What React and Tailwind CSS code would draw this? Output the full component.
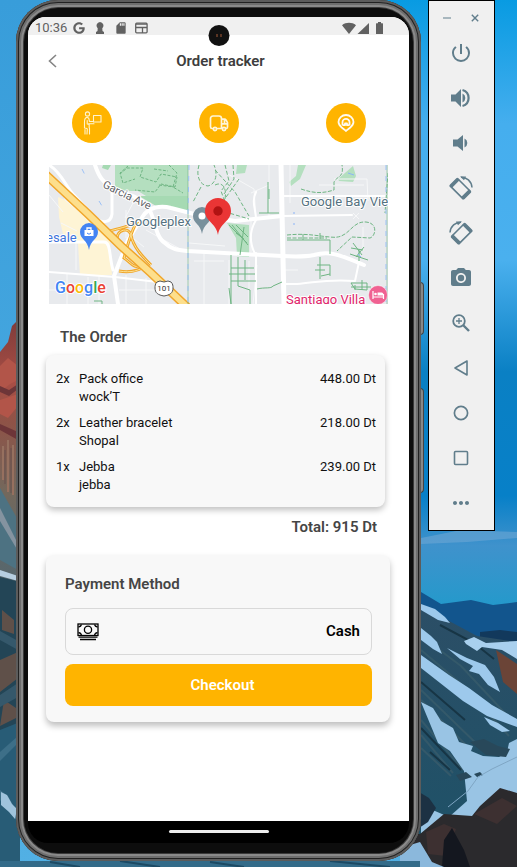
import React from "react";
import { FaGoogle } from "react-icons/fa";
import { MdPowerSettingsNew, MdPhotoCamera, MdSdCard, MdMoreHoriz } from "react-icons/md";

const items = [
  { qty: "2x", name: "Pack office", shop: "wock’T", price: "448.00 Dt" },
  { qty: "2x", name: "Leather bracelet", shop: "Shopal", price: "218.00 Dt" },
  { qty: "1x", name: "Jebba", shop: "jebba", price: "239.00 Dt" },
];

function Wallpaper() {
  return (
    <svg
      className="absolute inset-0 h-full w-full"
      viewBox="0 0 517 867"
      preserveAspectRatio="xMaxYMax slice"
      aria-hidden="true"
    >
      <defs>
        <linearGradient id="skyR" x1="0" y1="0" x2="0" y2="1">
          <stop offset="0" stopColor="#089be2" />
          <stop offset="0.2" stopColor="#45aeee" />
          <stop offset="0.42" stopColor="#4ab0ee" />
          <stop offset="0.6" stopColor="#0a80c4" />
          <stop offset="0.8" stopColor="#0780c8" />
          <stop offset="0.88" stopColor="#3f92cc" />
          <stop offset="1" stopColor="#1e9bcb" />
        </linearGradient>
        <linearGradient id="skyL" x1="0" y1="0" x2="0" y2="1">
          <stop offset="0" stopColor="#389dda" />
          <stop offset="1" stopColor="#52b0e4" />
        </linearGradient>
        <linearGradient id="cliff" x1="0" y1="0" x2="0" y2="1">
          <stop offset="0" stopColor="#7d3b3a" />
          <stop offset="0.22" stopColor="#a84e45" />
          <stop offset="0.36" stopColor="#8e5347" />
          <stop offset="0.6" stopColor="#73685c" />
          <stop offset="1" stopColor="#4c6673" />
        </linearGradient>
        <linearGradient id="slope" x1="0" y1="0" x2="0" y2="1">
          <stop offset="0" stopColor="#2c4e66" />
          <stop offset="1" stopColor="#1d5268" />
        </linearGradient>
      </defs>
      <rect width="517" height="867" fill="url(#skyL)" />
      <rect x="300" width="217" height="620" fill="url(#skyR)" />

      <path d="M0 352l8-10 4-16 8-8v290H0z" fill="url(#cliff)" />
      <path d="M0 366l8-8 10 8v14l-8 4-10 8zM0 400l18-6v12l-10 12-8-4z" fill="#b25549" />
      <path d="M0 386l9 4 9-6v5l-9 7-9-4zM0 424l18 8v8l-18-10z" fill="#6d3538" />
      <path d="M3 446v34M8 440v52M13 445v50" stroke="#96705f" strokeWidth="2" />
      <path d="M5 450v34M11 448v45" stroke="#69504e" strokeWidth="1" />
      <path d="M0 488l18 32v50l-18-10z" fill="#4d7282" />
      <path d="M0 508l18 36v7l-18-30z" fill="#8493a0" />
      <path d="M0 570l18 6v5l-18-5z" fill="#b7cee0" />
      <path d="M0 577l20 5v285H0z" fill="#234556" />
      <path d="M2 610l12 10v14l-12-4zM0 660l18-8v26l-18 14zM4 700l12 8v10l-16 8z" fill="#5f5049" />
      <path d="M0 640l18 10v-9l-18-10zM0 695l18-12v14l-18 10z" fill="#35586b" />
      <path d="M0 730l20-8v145H0z" fill="#285c76" />
      <path d="M0 752l18-16v7l-18 18zM0 790l8 6 10 18v8l-18-22z" fill="#3d6f88" />
      <path d="M1 792l6 3 5 9 5 5-2 10-6-7-8-7z" fill="#9fc3dc" />

      <path d="M421 538l40-8 56 2v6l-50 4-46 2z" fill="#6ea6d3" opacity="0.6" />
      <path d="M421 592l20 12 30-4 22 5 24-3v40h-96z" fill="#12558d" />
      <path d="M480 632l20-2 17 2v12h-37z" fill="#12395c" />
      <path d="M400 598l21 6 30 18 26 14 40 6v225H400z" fill="url(#slope)" />
      <path d="M496 650l21 14v30l-14-12z" fill="#6b4437" />
      <path d="M421 636l40 30 56 60M421 650l38 32 50 54M421 690l60 58M421 700l50 50M421 720l42 50M421 735l32 38M421 748l30 28" stroke="#34596a" strokeWidth="2" fill="none" />
      <path d="M440 625l34 18 20 16M421 682l44 38M421 728l40 42M430 752l20 18" stroke="#173545" strokeWidth="2" fill="none" />
      <path d="M421 604l14 5 10 8 5 6-12-3-17-10z" fill="#9dc9ec" />
      <path d="M421 628l10 8 6 6 5 12-9-5-12-9z" fill="#9dc9ec" />
      <path d="M464 641l10-4 12 6 31-2v18l-15-9-20-3-5 4-11-7z" fill="#a9d0ee" />
      <path d="M447 648l20 10 18 7 9 12 6 15-12-7-9-11-10-3 4-5-13-7z" fill="#9dc9ec" />
      <path d="M421 655l28 20 20 13 23 17 25 14v8l-30-11-24-15-42-33z" fill="#9dc9ec" />
      <path d="M484 717l14 6 12 8-8 1-12-7z" fill="#9dc9ec" />
      <path d="M421 702l12 6 8 13 12 7 6 14 14 4-2 5 12 5 16 1 8-5 2-9 8-4v62l-30 10-38 36-28-2v-40l28 12 18-16-3-30-14-20-12-8z" fill="#99c4e4" />
      <path d="M470 742l14-3 14 7 12 3-4 8-20-2zM456 775l10-3 6 5-12 4zM474 774l6-2 3 3-6 2z" fill="#28485a" />
      <path d="M448 807l20-16 10-14 14-8 25-12" stroke="#7fa6c4" strokeWidth="1" fill="none" />
      <path d="M419 792l10 6 7 10-8 14-9 6z" fill="#1c3143" />
      <path d="M400 834h20l24-20 28 2 8-10 20-18 17 5v74H400z" fill="#2b2a2d" />
      <path d="M426 832l18-8 12 5-10 27-18-2zM474 814l28-16 15 8-20 18z" fill="#3d3031" />
      <path d="M444 840l8-12 12 22 6 17h-28z" fill="#14171f" />
      <path d="M400 848l20-6 12 20 12 5h-44z" fill="#8bb8dc" />
      <path d="M0 861h420v6H0z" fill="#336b89" />
      <path d="M50 862l30 5M120 861l40 6M210 862l34 5M330 861l60 6" stroke="#1c4a64" strokeWidth="2" />
    </svg>
  );
}

function StatusBar() {
  return (
    <div className="flex h-[18px] items-center bg-[#f0f0f0] pt-1 pr-[26px] pl-[7px] text-[#616161]">
      <span className="mr-[6px] text-[13px] leading-[14px]">10:36</span>
      <FaGoogle size={12} />
      <svg className="ml-[11px]" width="8" height="12" viewBox="0 0 8 12" fill="currentColor">
        <path d="M4 0a3.600 3.600 0 0 1 2.300 6.200L6.500 9 8 10v2H0v-2l1.500-1 .2-2.800A3.600 3.600 0 0 1 4 0z" />
      </svg>
      <MdSdCard className="ml-[10px]" size={14} />
      <svg className="ml-[7px]" width="13" height="12" viewBox="0 0 13 12" fill="none" stroke="currentColor" strokeWidth="1.300">
        <rect x="0.700" y="1.200" width="11.400" height="9.600" rx="1" />
        <path d="M1 5.500h11M7.500 6v5" />
        <path d="M1 2.200h11" />
      </svg>
      <svg className="ml-auto" width="41" height="13" viewBox="0 0 41 13" fill="currentColor">
        <path d="M0 3.200C4 0 10 0 14 3.200L7 12z" />
        <path d="M27 1v11H15.500z" />
        <path d="M36 0h3v1.200h1.500q.5 0 .5.500V11.500q0 .5-.5.500h-6q-.5 0-.5-.5V1.700q0-.5.500-.5H36z" />
      </svg>
    </div>
  );
}

function Step({ label, children }) {
  return (
    <li className="grid h-10 w-10 place-items-center rounded-full bg-[#ffb400]" aria-label={label}>
      {children}
    </li>
  );
}

function Steps() {
  return (
    <ol className="mt-4 flex justify-around">
      <Step label="Picked up">
        <svg width="20" height="24" viewBox="0 0 20 24" fill="none" stroke="#fff3cf" strokeWidth="1.100" strokeLinejoin="round" strokeLinecap="round">
          <circle cx="5.500" cy="3" r="2.100" />
          <path d="M4.500 6.500C2.500 7 2.500 9 2.500 11v6l2.500.5M4.500 6.500C7 6 7 8 7.500 10.500H11.500M6.500 12.800H12M5.200 9.500v3.500l2 .5v3M5.300 18l-.3 5M3 18.500V23M7.500 17v6" />
          <rect x="11.500" y="4.500" width="7.500" height="6.500" />
        </svg>
      </Step>
      <Step label="On the way">
        <svg width="20" height="18" viewBox="0 0 20 18" fill="none" stroke="#fff5d8" strokeWidth="1.700" strokeLinejoin="round">
          <path d="M4 14.500H3.200A1.800 1.800 0 0 1 1.500 12.700V4.500A2.500 2.500 0 0 1 4 2h6a2.500 2.500 0 0 1 2.500 2.500v10H8M12.500 5.200h3a2 2 0 0 1 1.500.8l1.500 2.700v4.300a1.500 1.500 0 0 1-1.500 1.500M13 9.800h5.500M15.500 5.500v4" />
          <circle cx="6" cy="15" r="1.600" />
          <circle cx="15" cy="15" r="1.600" />
        </svg>
      </Step>
      <Step label="Delivered">
        <svg width="18" height="20" viewBox="0 0 18 20" fill="none" stroke="#fffaf0" strokeWidth="1.800" strokeLinejoin="round">
          <path d="M9 18c-1-1.300-2.500-2-4-3.200C3.200 13.200 1.500 11.500 1.500 9a7.500 7 0 0 1 15 0c0 2.500-1.700 4.200-3.500 5.800C11.500 16 10 16.700 9 18z" />
          <path d="M5.500 12.200V9.200a3.500 3.300 0 0 1 7 0v3M5.500 12.200H8V10.500h2v1.700h2.500" />
        </svg>
      </Step>
    </ol>
  );
}

function Pin({ x, y, r, tip, color, children }) {
  return (
    <g transform={`translate(${x} ${y})`}>
      <path
        d={`M${-r} 0A${r} ${r} 0 0 1 ${r} 0C${r} ${r * 0.8} ${r * 0.15} ${r * 0.9} 0 ${tip}C${-r * 0.15} ${r * 0.9} ${-r} ${r * 0.8} ${-r} 0z`}
        fill={color}
      />
      {children}
    </g>
  );
}

function Map() {
  return (
    <svg className="block h-auto w-full font-[Roboto,sans-serif]" viewBox="0 0 339 139" role="img" aria-label="Map around Googleplex">
      <rect width="339" height="139" fill="#e8eaed" />
      <path d="M9 32l12 5 17 15 22 15 1 10 2 33H31L29 79 14 69 10 52z" fill="#fef4d5" />
      <path d="M66 0h73v31H97l-8-5H66z" fill="#b4dfbf" />
      <path d="M90 31h49v16l-32-6zM54 0h8l-3 5-6-2z" fill="#a6dab3" />
      <path d="M188 0h10l-2 8-9 1zM178 58l22 2v32l-12-1-1-18zM249 0h8l-6 14-9 7-2-4 7-6zM289 14l15-13 3 10-3 6-14-1z" fill="#b4dfbf" />

      <g fill="none" stroke="#f6f7f8" strokeWidth="1">
        <path d="M0 30l14 17M16 22v13l10 8M27 77v28M18 108v31M39 112v27M50 110v29M77 110v29M97 113v26M0 125h30M70 125h44M70 62l25 20M97 65l36 20M140 78l36 3M155 88v51M285 14h33l1 22M314 62v24M234 105h15M241 0v38M270 20h45M180 95v44M200 96v43M220 20v32M202 28l18-8V0M177 8l28 16 2 28M202 55v32" />
        <path d="M304 48l6 6M310 48l-6 6M77 45v28M84 38l-8 15M145 96h30M208 100l-4 39M12 58l16 8" />
      </g>
      <g fill="none" stroke="#fff" strokeLinecap="round" strokeLinejoin="round">
        <path d="M0 0c12 7 16 20 24 29l20 21c8 10 18 8 19-1V27" strokeWidth="3" />
        <path d="M0 77h55c7 0 5 15 9 28" strokeWidth="3" />
        <path d="M0 107l66 5 51 6" strokeWidth="2" />
        <path d="M46 0c4 12 8 18 20 24 12 6 28 8 34 20 6 9 6 28 16 34 6 6 12 7 22 8l95 5c15 1 22 1 32-1 18-5 30 2 50 10" strokeWidth="4" />
        <path d="M69 139l-4-28 14-36 15-24c6-9 18-11 28-8l27 7 37 6 47-5" strokeWidth="4" />
        <path d="M233 51l70-1M233 31h106M207 27c-5 10 0 17 0 28-6 10-7 22-1 34M234 119h14c22-2 30-5 58-3l4-19M207 88v51" strokeWidth="2" />
        <path d="M232 0l3 139" strokeWidth="5" />
      </g>
      <g fill="none" stroke="#f0a62b" strokeWidth="3">
        <path d="M60 66c10-2 18-5 27-7-5 7-9 24-12 34 6 4 10 10 14 8M68 74c0-10 12-12 14-4 2 12 12 22 20 30M70 106c12 2 20 0 28-6" />
      </g>
      <g fill="none" stroke="#fde293" strokeWidth="1">
        <path d="M60 66c10-2 18-5 27-7-5 7-9 24-12 34 6 4 10 10 14 8M68 74c0-10 12-12 14-4 2 12 12 22 20 30M70 106c12 2 20 0 28-6" />
      </g>
      <path d="M-4 9l42 39 34 33 30 27 36 34" fill="none" stroke="#f0a62b" strokeWidth="9" />
      <path d="M-4 9l42 39 34 33 30 27 36 34" fill="none" stroke="#fddf8c" strokeWidth="6" />

      <g fill="none" stroke="#6fb583" strokeWidth="1">
        <path d="M71 9l7-6 16 0-3 9 16 5 5-8 16 3-2 10-14-3-6 8-20-2M79 1l-8 7 3 10 12-4M120 0l8 8-4 14 10 6M105 4l14 2M110 20l15 2" strokeDasharray="3 1.500" />
        <path d="M139 0v139M338 0v139" opacity="0.600" />
        <path d="M150 0c-3 10 0 20 9 21 8-2 10-12 6-21M166 5l20 22 14 24M176 0l4 16-8 10 8 22 20 6M184 0l1 14-10 15M152 22l-8 15M166 20c8-4 12 4 10 14M190 14l-20 28" strokeDasharray="4 2" />
        <path d="M219 17v31M210 48h20M220 24v10M195 62l-4 28M182 90v49M189 92v29l12 4v14M180 109h26M182 103h23M182 116h25M196 95v20M182 139l-2-16M208 124c8-2 14 0 16-3l9-4M187 60l12 12M183 60l16 20M180 60l18 18M187 68l8 6" />
        <path d="M252 24c12 4 20 5 33 1v-8c4-7 10-4 8-17M238 70c20-2 30 1 43 2 20 3 20-16 36-15 12 1 10 14 4 16l-18-1-15 14M339 8l-3 40M238 73l40 0" strokeDasharray="4 1.500" />
        <path d="M238 75h43v14M254 69v6M271 68v6M302 83l12 2M301 89l18 6M304 78l9 12M315 82l-8 10M310 84v12M271 92v22M268 100h13v11M272 111l9-2M266 105h10M302 118h16v7l-12-1zM306 120v5M313 115v10M45 136h8v3M302 122h20" />
      </g>
      <path d="M140 0l-1 48v91M337 0v139M50 36l3 5M33 4l4 8" fill="none" stroke="#9cc1f6" strokeWidth="1" strokeDasharray="5 6" />
      <path d="M299 8l6 2M309 89l3 3M245 47v2M245 58v2" stroke="#8ab4f8" strokeWidth="1" />

      <g stroke="#fff" strokeWidth="2" strokeLinejoin="round" paintOrder="stroke">
        <text x="53" y="22" transform="rotate(26 53 22)" fontSize="11" fill="#5f6368">Garcia Ave</text>
        <text x="77" y="61" fontSize="13" fill="#557281">Googleplex</text>
        <text x="252" y="41" fontSize="13" fill="#557281">Google Bay Vie</text>
        <text x="-3" y="77" fontSize="13" fill="#3f74db">esale</text>
        <text x="237" y="139" fontSize="13" fill="#e0256b">Santiago Villa</text>
        <text x="6" y="128" fontSize="16" fontWeight="500" fontFamily="Roboto, sans-serif"><tspan fill="#4285f4">G</tspan><tspan fill="#ea4335">o</tspan><tspan fill="#fbbc05">o</tspan><tspan fill="#4285f4">g</tspan><tspan fill="#34a853">l</tspan><tspan fill="#ea4335">e</tspan></text>
      </g>
      <path d="M108 117l3-1 4 1 4-1 3 1c2 2 2 4 2 6 0 5-3 7-9 8-6-1-9-3-9-8 0-2 0-4 2-6z" fill="#fff" stroke="#555" />
      <text x="115" y="126" textAnchor="middle" fontSize="8" fill="#333">101</text>

      <Pin x={40} y={67} r={9} tip={18} color="#4484f3">
        <path d="M-4.500-2h9v6h-9z" fill="#fff" />
        <path d="M-2-2v-2h4v2" fill="none" stroke="#fff" strokeWidth="1.300" />
        <path d="M-2 1q2 2.500 4 0" fill="none" stroke="#4484f3" />
      </Pin>
      <Pin x={153} y={51} r={9} tip={18} color="#78909c">
        <circle r="3.500" fill="#fff" />
      </Pin>
      <Pin x={169} y={46} r={13} tip={24} color="#ea3535">
        <circle r="4.700" fill="#b11313" />
      </Pin>
      <g transform="translate(329 130)">
        <circle r="9.500" fill="#f06292" stroke="#fff" strokeWidth="0.500" />
        <path d="M-5-4v8M-5 2H5.500M5.500 4V-1" stroke="#fff" strokeWidth="1.200" />
        <circle cx="-2.500" cy="-1" r="1.300" fill="#fff" />
        <path d="M-.5-2.500h4q2 0 2 3h-6z" fill="#fff" />
      </g>
    </svg>
  );
}

function CashIcon() {
  return (
    <svg width="22" height="18" viewBox="0 0 22 18" fill="none" stroke="#000" strokeWidth="1.300" aria-hidden="true">
      <rect x="1" y="1" width="20" height="11.500" />
      <circle cx="11" cy="6.800" r="3.600" />
      <path d="M4.500 1.500Q4 3.500 1.500 4M17.500 1.500Q18 3.500 20.500 4M4.500 12Q4 10 1.500 9.500M17.500 12Q18 10 20.500 9.500" />
      <path d="M1.500 14.200h19M3 16.500h16" strokeWidth="1.300" />
    </svg>
  );
}

function Phone() {
  return (
    <div className="relative flex min-w-0 flex-1">
      <div className="absolute top-[282px] -right-[3px] h-[53px] w-[4px] rounded-r-sm border border-[#444] bg-[#888]" />
      <div className="absolute top-[388px] -right-[3px] h-[105px] w-[4px] rounded-r-sm border border-[#444] bg-[#888]" />
      <div className="relative flex flex-1 rounded-[42px] bg-[#3a3a3a] p-2 shadow-[inset_0_0_0_2px_#5c5c5c,inset_0_0_0_3px_#222,inset_0_0_0_5px_#6e6e6e,inset_0_0_0_7px_#8a8a8a]">
        <div className="flex flex-1 rounded-[34px] bg-[#0d0d0d] px-1 pt-[9px] pb-[10px]">
          <div className="relative flex flex-1 flex-col overflow-hidden rounded-t-[18px] rounded-b-[20px] bg-black">
            <main className="flex flex-1 flex-col bg-white">
              <StatusBar />
              <header className="flex h-[52px] items-center px-5">
                <button className="w-6" aria-label="Back">
                  <svg width="9" height="14" viewBox="0 0 9 14" fill="none" stroke="#858585" strokeWidth="1.600">
                    <path d="M8 1L1.500 7 8 13" />
                  </svg>
                </button>
                <h1 className="flex-1 pr-5 text-center text-[15px] font-semibold text-[#3d3d3d]">Order tracker</h1>
              </header>
              <Steps />
              <div className="mt-[22px] px-[21px]">
                <Map />
              </div>
              <h2 className="mt-[23px] pl-8 text-[15px] leading-5 font-semibold text-[#454545]">The Order</h2>
              <ul className="mt-2 mr-6 ml-[18px] flex flex-col gap-2 rounded-lg bg-[#f8f8f8] pt-[15px] pr-[9px] pb-[13px] pl-[10px] text-[13px] leading-[18px] text-[#111] shadow-[0_3px_6px_rgba(0,0,0,0.25)]">
                {items.map((it) => (
                  <li key={it.name} className="flex">
                    <span className="w-[23px]">{it.qty}</span>
                    <span className="flex-1">
                      {it.name}
                      <br />
                      {it.shop}
                    </span>
                    <span>{it.price}</span>
                  </li>
                ))}
              </ul>
              <p className="mt-[10px] pr-8 text-right text-[15px] leading-5 font-semibold text-[#454545]">Total: 915 Dt</p>
              <section className="mt-[18px] mr-[19px] ml-[18px] rounded-lg bg-[#f8f8f8] pt-[19px] pr-[18px] pb-4 pl-[19px] shadow-[0_4px_6px_rgba(0,0,0,0.25)]">
                <h2 className="text-[15px] leading-5 font-semibold text-[#454545]">Payment Method</h2>
                <button className="mt-[14px] flex h-[47px] w-full items-center justify-between rounded-lg border border-[#d9d9d9] px-[11px] text-[15px] font-semibold text-black">
                  <CashIcon />
                  Cash
                </button>
                <button className="mt-[9px] h-[42px] w-full rounded-lg bg-[#ffb400] pl-2 text-[15px] font-semibold text-white">
                  Checkout
                </button>
              </section>
            </main>
            <div className="flex h-[22px] justify-center pt-[9px]">
              <div className="h-[3px] w-[100px] rounded-full bg-[#eee]" />
            </div>
          </div>
        </div>
        <div className="absolute top-[25px] left-1/2 flex h-[21px] w-[21px] -translate-x-1/2 items-center justify-center gap-[3px] rounded-full bg-[#111]">
          <span className="h-[3px] w-px bg-[#a55b36]" />
          <span className="h-[3px] w-px bg-[#a55b36]" />
        </div>
      </div>
    </div>
  );
}

function RotateIcon({ flip }) {
  return (
    <svg className={flip ? "-scale-x-100" : ""} width="24" height="24" viewBox="0 0 24 24" fill="none" stroke="currentColor">
      <g transform="rotate(45 11.500 12.500)">
        <rect x="2" y="7.500" width="19" height="10.500" rx="1" strokeWidth="1.600" />
        <path d="M3.500 7v11.500M19.500 7v11.500" strokeWidth="3" />
      </g>
      <path d="M12 1.200c5.500-.2 10.500 4 11 10.300" strokeWidth="1.500" />
      <path d="M11 .4h6l-2 3.800z" fill="currentColor" stroke="none" />
    </svg>
  );
}

const tools = [
  ["Power", <MdPowerSettingsNew size={24} />],
  [
    "Volume up",
    <svg width="20" height="20" viewBox="0 0 20 20" fill="currentColor">
      <path d="M0 6.500h4.500L10 1v18l-5.500-5.500H0zM11.500 5.500a5 5 0 0 1 0 9z" />
      <path d="M11.500 2a8.300 8.300 0 0 1 0 16" fill="none" stroke="currentColor" strokeWidth="2.200" />
    </svg>,
  ],
  [
    "Volume down",
    <svg width="16" height="18" viewBox="0 0 16 18" fill="currentColor">
      <path d="M0 5.500h4.500L10 1v16l-5.500-4.500H0zM11.500 4.500a5 5 0 0 1 0 9z" />
    </svg>,
  ],
  ["Rotate left", <RotateIcon />],
  ["Rotate right", <RotateIcon flip />],
  ["Take screenshot", <MdPhotoCamera size={24} />],
  [
    "Zoom",
    <svg width="18" height="18" viewBox="0 0 18 18" fill="none" stroke="currentColor" strokeWidth="1.800">
      <circle cx="7" cy="7" r="5.800" />
      <path d="M11 11l6 6" strokeWidth="2.400" />
      <path d="M7 4v6M4 7h6" strokeWidth="1.300" />
    </svg>,
  ],
  [
    "Back",
    <svg width="16" height="16" viewBox="0 0 16 16" fill="none" stroke="currentColor" strokeWidth="1.600" strokeLinejoin="round">
      <path d="M14 1v14L2 8z" />
    </svg>,
  ],
  [
    "Home",
    <svg width="16" height="16" viewBox="0 0 16 16" fill="none" stroke="currentColor" strokeWidth="1.700">
      <circle cx="8" cy="8" r="6.600" />
    </svg>,
  ],
  [
    "Overview",
    <svg width="16" height="16" viewBox="0 0 16 16" fill="none" stroke="currentColor" strokeWidth="1.600">
      <rect x="1.500" y="1.500" width="13" height="13" rx="1" />
    </svg>,
  ],
  ["More", <MdMoreHoriz size={24} />],
];

function Toolbar() {
  return (
    <aside className="z-10 flex w-[67px] flex-col self-start border border-black bg-[#f0f0f0] pt-[11px] pb-[5px] text-[#607d8b]">
      <div className="flex justify-between pr-[15px] pl-[14px]">
        <button aria-label="Minimize" className="grid h-3 w-2 place-items-center">
          <svg width="8" height="8" viewBox="0 0 8 8" stroke="#90a4ae" strokeWidth="1.500">
            <path d="M0 4h8" />
          </svg>
        </button>
        <button aria-label="Close" className="grid h-3 w-2 place-items-center">
          <svg width="8" height="8" viewBox="0 0 8 8" stroke="currentColor" strokeWidth="1.400">
            <path d="M.8.8l6.400 6.400M7.200.8L.8 7.200" />
          </svg>
        </button>
      </div>
      <div className="mt-[6px] flex flex-col pr-px">
        {tools.map(([label, icon]) => (
          <button key={label} aria-label={label} className="grid h-[45px] w-full place-items-center">
            {icon}
          </button>
        ))}
      </div>
    </aside>
  );
}

export default function App() {
  return (
    <div className="relative min-h-screen overflow-hidden font-[Roboto,sans-serif]">
      <Wallpaper />
      <div className="relative flex min-h-screen gap-[7px] pr-[22px] pb-[6px] pl-4">
        <Phone />
        <Toolbar />
      </div>
    </div>
  );
}
